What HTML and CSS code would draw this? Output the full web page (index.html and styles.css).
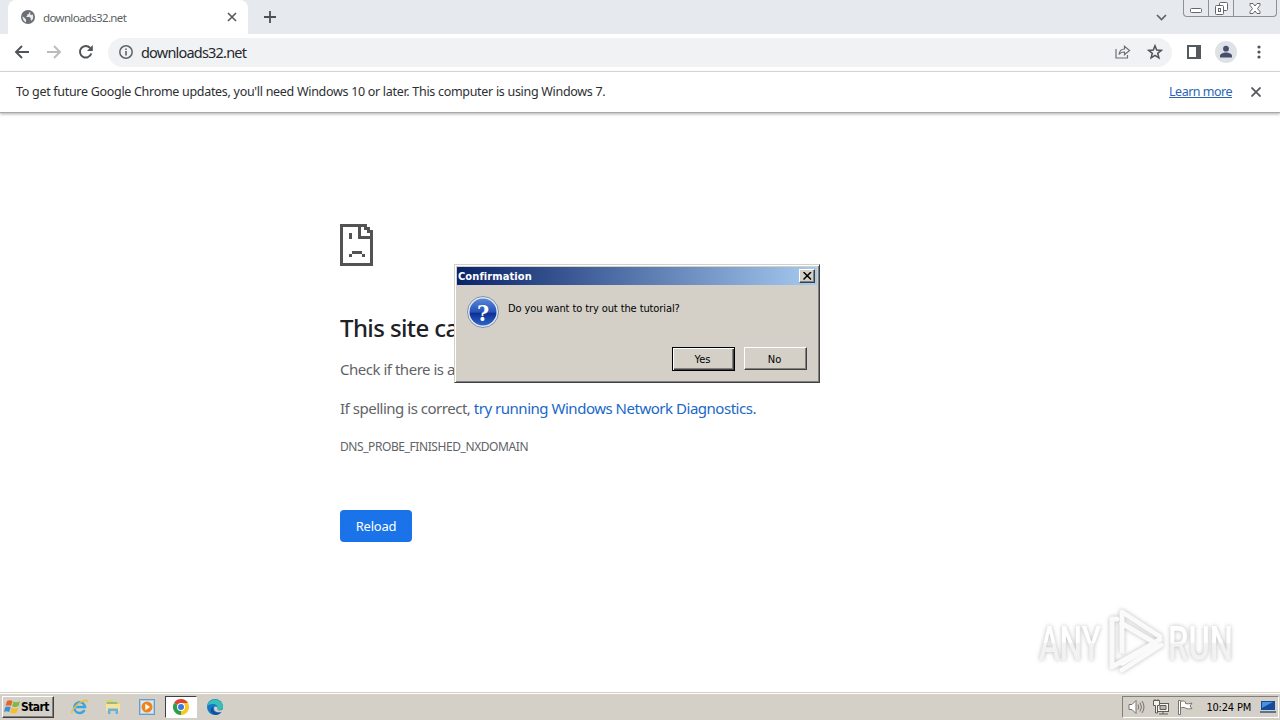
FILE: index.html
```html
<!DOCTYPE html>
<html lang="en">
  <head>
    <meta charset="UTF-8" />
    <meta name="viewport" content="width=device-width, initial-scale=1.0" />
    <title>downloads32.net</title>
    <link rel="stylesheet" href="styles.css">
  </head>

  <body>
    <div class="screen">
      <!-- tabs -->
      <div class="tabs">
        <div class="tab">
          <svg class="globe" width="14" height="14" viewBox="0 0 14 14">
            <circle cx="7" cy="7" r="7" fill="#6b6e72" />
            <path d="M1.5 6.2 4 8.3l1 1.2v2.7C2.7 11.500 1.400 9 1.500 6.200zM5.200 2.400h3l-.4 1.500-1.600.6v1.400L4.800 7h3.700l1.200 1.300v1.900l1.200.4c1.200-1.400 1.900-3.800.8-6L9.900 5 9 4l.7-1.600z" fill="#e9ebee" />
          </svg>
          <span class="tab-title">downloads32.net</span>
          <svg width="10" height="10" viewBox="0 0 10 10" stroke="#55585c" stroke-width="1.6"><path d="M1 1l8 8M9 1L1 9" /></svg>
        </div>
        <svg class="plus" width="12" height="12" viewBox="0 0 12 12" stroke="#4c4f53" stroke-width="1.8"><path d="M6 0v12M0 6h12" /></svg>
        <svg class="chevron" width="11" height="7" viewBox="0 0 11 7" fill="none" stroke="#5f6368" stroke-width="1.7"><path d="M1 1l4.500 4.500L10 1" /></svg>
        <div class="caption">
          <span><svg width="12" height="5" viewBox="0 0 12 5"><rect x=".5" y=".5" width="11" height="4" rx="1" fill="#fff" stroke="#63666b" /></svg></span>
          <span><svg width="13" height="13" viewBox="0 0 13 13" fill="#fff" stroke="#63666b"><rect x="4.500" y=".5" width="8" height="8" rx="1" /><rect x=".5" y="3.500" width="8" height="9" rx="1" /><rect x="3.500" y="6.500" width="2" height="3" /></svg></span>
          <span><svg width="12" height="11" viewBox="0 0 12 11"><path d="M1 .5h3l2 2.500 2-2.500h3v1.800L8.500 5.500 11 8.700v1.800H8L6 8l-2 2.500H1V8.700l2.500-3.200L1 2.300z" fill="#fff" stroke="#63666b" /></svg></span>
        </div>
      </div>

      <!-- toolbar -->
      <div class="toolbar">
        <svg class="back" width="16" height="14" viewBox="0 0 16 14" fill="none" stroke="#505357" stroke-width="1.900"><path d="M15 7H2M8 1L2 7l6 6" /></svg>
        <svg class="forward" width="16" height="14" viewBox="0 0 16 14" fill="none" stroke="#b9bbbe" stroke-width="1.900"><path d="M1 7h13M8 1l6 6-6 6" /></svg>
        <svg class="reload" width="16" height="16" viewBox="0 0 16 16" fill="none" stroke="#505357" stroke-width="2"><path d="M13.300 9.500A5.800 5.800 0 1 1 12.200 4" /><path d="M14.800 1v6H9z" fill="#505357" stroke="none" /></svg>
        <div class="address">
          <svg width="14" height="14" viewBox="0 0 14 14"><circle cx="7" cy="7" r="6.200" fill="none" stroke="#5f6368" stroke-width="1.500" /><path d="M6.200 6h1.600v4.500H6.200zM6.200 3.400h1.600V5H6.200z" fill="#5f6368" /></svg>
          <span class="url">downloads32.net</span>
          <svg class="share" width="16" height="14" viewBox="0 0 16 14" fill="none" stroke="#6b6e72" stroke-width="1.200"><path d="M1 4v9h11.500v-3M4 9.500C4.500 6 6.500 4 9.500 4V1.300L14.500 5.500l-5 4.200V7C7 7 5.200 7.700 4 9.500z" /></svg>
          <svg class="star" width="16" height="16" viewBox="0 0 16 16" fill="none" stroke="#505357" stroke-width="1.500"><path d="M8 1.800l1.700 4.300 4.500.3-3.500 2.900 1.200 4.500L8 11.300l-3.900 2.500 1.200-4.500L1.800 6.400l4.500-.3z" /></svg>
        </div>
        <svg class="panel" width="14" height="14" viewBox="0 0 14 14"><path d="M0 0h14v14H0zM2 2v10h7V2z" fill="#55585c" fill-rule="evenodd" /></svg>
        <svg class="profile" width="22" height="22" viewBox="0 0 22 22"><circle cx="11" cy="11" r="11" fill="#dee1e6" /><circle cx="11" cy="7.700" r="2.900" fill="#46506e" /><path d="M5 16.500v-1.700c0-2 3.500-3.300 6-3.300s6 1.300 6 3.300v1.700z" fill="#46506e" /></svg>
        <svg class="dots" width="4" height="14" viewBox="0 0 4 14" fill="#505357"><circle cx="2" cy="2" r="1.600" /><circle cx="2" cy="7" r="1.600" /><circle cx="2" cy="12" r="1.600" /></svg>
      </div>

      <!-- update notice -->
      <div class="notice">
        <span class="notice-text">To get future Google Chrome updates, you'll need Windows 10 or later. This computer is using Windows 7.</span>
        <a class="learn" href="#">Learn more</a>
        <svg width="10" height="10" viewBox="0 0 10 10" stroke="#55585c" stroke-width="1.800"><path d="M.5.5l9 9M9.500.5l-9 9" /></svg>
      </div>

      <!-- error page -->
      <div class="page">
        <svg class="sad" width="34" height="43" viewBox="0 0 34 43" shape-rendering="crispEdges">
          <path d="M0 0h27v3h3v3h3v36H0zM3 3v36h27V15H18V3zM21 3v9h9V9h-3V6h-3V3z" fill="#535353" fill-rule="evenodd" />
          <path d="M9 9h3v6H9zM12 27h10v3H12zM9 30h3v3H9zM22 30h3v3h-3z" fill="#535353" />
        </svg>
        <h1>This site can't be reached</h1>
        <p class="check">Check if there is a typo in downloads32.net.</p>
        <p class="spell">If spelling is correct, <a href="#">try running Windows Network Diagnostics.</a></p>
        <p class="code">DNS_PROBE_FINISHED_NXDOMAIN</p>
        <button class="reload-btn">Reload</button>
      </div>

      <!-- taskbar -->
      <div class="taskbar">
        <div class="start">
          <svg width="17" height="16" viewBox="0 0 17 16">
            <path d="M3 2c2-1.200 3.500-1 5.500 0L7 7C5 6 3.500 6 1.500 7z" fill="#e8632b" />
            <path d="M9.500 2.500c2 1 4 1 6.500-.3L14.500 7c-2 1.200-4.500 1.200-6.500.3z" fill="#7fb842" />
            <path d="M1.200 8.200c2-1 3.600-1 5.500 0L5.200 13c-2-1-3.500-1-5.200 0z" fill="#3f8fd0" />
            <path d="M7.700 8.700c2 1 4.500 1 6.500 0L12.800 13.500c-2 1.200-4.500 1.200-6.500.2z" fill="#f4bd2c" />
          </svg>
          <b>Start</b>
        </div>
        <div class="app">
          <svg width="17" height="16" viewBox="0 0 17 16" fill="none">
            <path d="M13.500 11c-1 2-2.700 3-4.900 3a5.400 5.400 0 1 1 5.400-6H5" stroke="#3aa5dc" stroke-width="2.500" />
            <path d="M1 14.500C-.5 11 9 1.500 15 1.200c1.200 0 1.400 1.300.8 2.600" stroke="#e9bd45" stroke-width="1.400" />
          </svg>
        </div>
        <div class="app">
          <svg width="16" height="16" viewBox="0 0 16 16">
            <path d="M1 1h6l1 1.500h6V10H1z" fill="#e9cd72" />
            <path d="M2 3h10v2H2z" fill="#8fbf7f" />
            <path d="M1 5h14v7H1z" fill="#f6e29a" />
            <path d="M3 15V9.500h10V15h-2.500v-3h-5v3z" fill="#69b3d9" />
          </svg>
        </div>
        <div class="app">
          <svg width="16" height="16" viewBox="0 0 16 16">
            <rect x=".5" y=".5" width="15" height="15" fill="#a9cdea" stroke="#6a9cc4" />
            <rect x="2" y="2" width="12" height="12" fill="#d9ebf7" />
            <circle cx="8" cy="8" r="5.500" fill="#f08418" />
            <path d="M6.300 4.800v6.400L11 8z" fill="#fff" />
          </svg>
        </div>
        <div class="app active">
          <svg width="16" height="16" viewBox="0 0 16 16">
            <path d="M8 8L1.070 4A8 8 0 0 1 14.930 4z" fill="#df4432" />
            <path d="M8 8l6.930-4A8 8 0 0 1 8 16z" fill="#fbc722" />
            <path d="M8 8v8A8 8 0 0 1 1.070 4z" fill="#2d9e4c" />
            <path d="M8 4h6.930L11.500 10 8 16z" fill="#fbc722" />
            <circle cx="8" cy="8" r="4" fill="#fff" />
            <circle cx="8" cy="8" r="3" fill="#3b78e0" />
          </svg>
        </div>
        <div class="app">
          <svg width="16" height="16" viewBox="0 0 16 16">
            <circle cx="8" cy="8" r="8" fill="#1678c8" />
            <path d="M.2 7A8 8 0 0 1 16 7.500c0 2-1.500 3.500-3.800 3.500-2 0-2.700-1-2-2 .8-1.500-.8-4-4-4C3.500 5 1 5.800.2 7z" fill="#35c1b5" />
            <path d="M6.200 8c-1 3 1.300 6 5.300 5.800 1.500 0 2.500-.6 3.200-1.200-2 3.600-6.500 4.300-9.200 2C2.500 12.500 3.500 8.500 6.200 8z" fill="#124f96" />
            <path d="M8 7.500c2 0 2.500.8 2.200 1.800-.3 1.200.8 2.100 2.500 2.100 1.300 0 2.300-.5 3.300-1.200V13l-1.500-.3c-3 1.500-7 .2-7.500-2.400C6.800 9 7.200 8 8 7.500z" fill="#d4d0c8" />
          </svg>
        </div>
        <div class="tray">
          <svg width="17" height="16" viewBox="0 0 17 16" fill="none" stroke="#77746f">
            <path d="M1 5.500h3l4-4v13l-4-4H1z" fill="#fff" /><path d="M10 5.500q1.500 2.500 0 5M12 3.500q3 4.500 0 9M14 2q4 6 0 12" />
          </svg>
          <svg class="net" width="16" height="16" viewBox="0 0 16 16" fill="#f3f2ef" stroke="#5f5c58">
            <rect x="4.500" y="4.500" width="11" height="8" /><path d="M7 6.500h6v4H7z" fill="#b8b5ae" /><path d="M6 15h9M10 12.500V15" /><path d="M.5 1.500h6v5h-2V14h-2V6.500h-2zM2 0v2M5 0v2" />
          </svg>
          <svg class="flag" width="17" height="16" viewBox="0 0 17 16" fill="#fff" stroke="#77746f">
            <path d="M1.500 1.500h2v14h-2z" /><path d="M3.500 2.500c2-1 3.500-.5 5 .5v1.500c2 .5 4 .3 6.500-.5L13 7l2 2.500c-3 .8-4.500.5-6.500-.5-2-1-3-.7-5 .2z" />
          </svg>
          <span class="clock">10:24 PM</span>
          <svg width="16" height="14" viewBox="0 0 16 14"><path d="M1 1h14v9H1z" fill="#17499a" /><path d="M2 2h11L2 8z" fill="#4b90df" /><path d="M0 11h16v2H0z" fill="#5f7489" /></svg>
        </div>
      </div>

      <!-- watermark -->
      <svg class="watermark" width="240" height="84" viewBox="0 0 240 84">
        <defs>
          <linearGradient id="fade" gradientUnits="userSpaceOnUse" x1="0" y1="20" x2="0" y2="56"><stop offset=".5" stop-color="#fff" /><stop offset=".55" stop-color="#f2f2f2" /></linearGradient>
        </defs>
        <g class="letters">
          <text x="14" y="56" textLength="62" lengthAdjust="spacingAndGlyphs">ANY</text>
          <text x="143" y="56" textLength="65" lengthAdjust="spacingAndGlyphs">RUN</text>
        </g>
        <g class="play">
          <path d="M97 47V8l38 24.500" />
          <path d="M97 19.500l34 20-34 20" />
          <path d="M92 15h-5v48l48-27.500" />
          <path d="M97 66l39-25" />
        </g>
      </svg>

      <!-- confirmation window -->
      <div class="dialog">
        <div class="dialog-title">
          <b>Confirmation</b>
          <span class="dialog-close"><svg width="9" height="8" viewBox="0 0 9 8" stroke="#000" stroke-width="1.500"><path d="M.5 0l7.500 7.500M8 0L.5 7.500" /></svg></span>
        </div>
        <div class="dialog-body">
          <svg class="question" width="32" height="32" viewBox="0 0 32 32">
            <defs>
              <linearGradient id="ball" x1="0" y1="0" x2="0" y2="1"><stop offset="0" stop-color="#5a86d8" /><stop offset=".5" stop-color="#2453b8" /><stop offset=".55" stop-color="#102f94" /><stop offset="1" stop-color="#2a66cc" /></linearGradient>
            </defs>
            <circle cx="16" cy="16" r="15.500" fill="#e6eaf0" stroke="#8190a8" />
            <circle cx="16" cy="16" r="13.500" fill="url(#ball)" />
            <text x="16" y="24.500" text-anchor="middle">?</text>
          </svg>
          <span class="ask">Do you want to try out the tutorial?</span>
        </div>
        <div class="dialog-buttons">
          <button class="yes">Yes</button>
          <button class="no">No</button>
        </div>
      </div>
    </div>
  </body>
</html>
```
FILE: styles.css
```css
* {
  margin: 0;
  padding: 0;
  box-sizing: border-box;
}

body {
  background: #fff;
  font-family: "Noto Sans", "Open Sans", sans-serif;
}

svg {
  display: block;
  flex-shrink: 0;
}

.screen {
  position: relative;
  width: 1280px;
  height: 720px;
  display: flex;
  flex-direction: column;
  overflow: hidden;
}

span,
a,
b,
h1,
p {
  white-space: nowrap;
}

/* tabs */
.tabs {
  height: 34px;
  display: flex;
  align-items: center;
  background: #e6e9ed;
}

.tab {
  width: 240px;
  height: 34px;
  margin-left: 8px;
  padding: 0 11px 0 13px;
  display: flex;
  align-items: center;
  background: #fff;
  border-radius: 8px 8px 0 0;
}

.tab-title {
  margin-left: 8px;
  margin-right: auto;
  font-size: 11.5px;
  letter-spacing: -0.65px;
  color: #5c5f63;
}

.plus {
  margin-left: 16px;
}

.chevron {
  margin-left: auto;
}

.caption {
  align-self: flex-start;
  margin: 0 3px 0 16px;
  width: 94px;
  height: 17px;
  display: flex;
  border: 1px solid #8d9095;
  border-top: none;
  border-radius: 0 0 4px 4px;
}

.caption span {
  width: 25px;
  display: flex;
  justify-content: center;
  align-items: center;
  border-right: 1px solid #8d9095;
}

.caption span:first-child svg {
  margin-top: 5px;
}

.caption span:last-child {
  flex: 1;
  border: none;
}

/* toolbar */
.toolbar {
  height: 38px;
  padding: 0 19px 1px 14px;
  display: flex;
  align-items: center;
  border-bottom: 1px solid #d9dbde;
}

.forward {
  margin-left: 16px;
}

.reload {
  margin-left: 16px;
}

.address {
  width: 1064px;
  height: 29px;
  margin-left: 14px;
  padding: 0 9px 0 11px;
  display: flex;
  align-items: center;
  background: #f0f2f4;
  border-radius: 15px;
}

.url {
  margin-left: 8px;
  margin-right: auto;
  font-size: 14.5px;
  letter-spacing: -0.8px;
  color: #26282b;
}

.star {
  margin-left: 16px;
}

.panel {
  margin-left: 15px;
}

.profile {
  margin-left: 14px;
}

.dots {
  margin-left: 20px;
}

/* update notice */
.notice {
  height: 41px;
  padding: 0 19px 1px 16px;
  display: flex;
  align-items: center;
  font-size: 12.5px;
  color: #2d2f32;
  border-bottom: 1px solid #a9a9a9;
  box-shadow: 0 1px 3px #aaa;
}

.notice-text {
  letter-spacing: -0.3px;
}

.learn {
  margin-left: auto;
  margin-right: 19px;
  letter-spacing: -0.5px;
  color: #2a65b5;
}

/* error page */
.page {
  flex: 1;
  padding: 111px 0 0 340px;
  color: #5f6368;
}

.page h1 {
  margin-top: 46px;
  font-size: 24px;
  line-height: 30px;
  font-weight: 500;
  letter-spacing: -0.6px;
  color: #202124;
}

.check {
  margin-top: 16px;
  font-size: 15px;
  line-height: 20px;
  letter-spacing: -0.48px;
}

.spell {
  margin-top: 19px;
  font-size: 15px;
  line-height: 20px;
  letter-spacing: -0.48px;
}

.spell a {
  color: #1967c8;
  text-decoration: none;
}

.code {
  margin-top: 19px;
  font-size: 12px;
  line-height: 20px;
  letter-spacing: -0.42px;
}

.reload-btn {
  display: block;
  width: 72px;
  height: 32px;
  margin-top: 53px;
  font-family: inherit;
  font-size: 13px;
  letter-spacing: -0.2px;
  color: #fff;
  background: #1a73e8;
  border: none;
  border-radius: 4px;
}

/* taskbar */
.taskbar {
  height: 28px;
  padding: 3px 1px 1px 2px;
  display: flex;
  background: #d4d0c8;
  border-top: 1px solid #d4d0c8;
  box-shadow: inset 0 1px #fff;
  font-family: "DejaVu Sans Condensed", "DejaVu Sans", sans-serif;
  font-stretch: condensed;
}

.start {
  width: 52px;
  height: 22px;
  margin-right: 9px;
  padding-left: 1px;
  display: flex;
  align-items: center;
  font-size: 12px;
  letter-spacing: -0.6px;
  border: 1px solid;
  border-color: #fff #404040 #404040 #fff;
  box-shadow: inset -1px -1px #808080;
}

.app {
  width: 32px;
  height: 22px;
  margin-right: 2px;
  display: flex;
  align-items: center;
  justify-content: center;
}

.active {
  background: #fff;
  border: 1px solid;
  border-color: #404040 #fff #fff #404040;
}

.tray {
  width: 157px;
  height: 22px;
  margin-left: auto;
  padding: 0 2px 0 5px;
  display: flex;
  align-items: center;
  border: 1px solid;
  border-color: #808080 #fff #fff #808080;
}

.net,
.flag {
  margin-left: 8px;
}

.clock {
  margin-left: auto;
  margin-right: 9px;
  font-size: 11px;
  letter-spacing: -0.2px;
}

/* watermark */
.watermark {
  position: absolute;
  left: 1025px;
  top: 604px;
  fill: url(#fade);
  filter: drop-shadow(0 0 2px #bbb);
}

.letters {
  font-family: Roboto, sans-serif;
  font-size: 49px;
  font-weight: 500;
}

.play {
  fill: none;
  stroke: #fafafa;
  stroke-width: 5;
  stroke-linejoin: round;
  stroke-linecap: round;
}

/* confirmation window */
.dialog {
  position: absolute;
  left: 454px;
  top: 264px;
  width: 366px;
  height: 119px;
  padding: 2px;
  background: #d4d0c8;
  border: 1px solid;
  border-color: #d4d0c8 #404040 #404040 #d4d0c8;
  box-shadow: inset 1px 1px #fff, inset -1px -1px #808080;
  font-family: "DejaVu Sans Condensed", "DejaVu Sans", sans-serif;
  font-stretch: condensed;
  font-size: 11px;
  color: #000;
}

.dialog-title {
  height: 18px;
  padding: 0 2px 0 1px;
  display: flex;
  align-items: center;
  justify-content: space-between;
  letter-spacing: 0.1px;
  color: #fff;
  background: linear-gradient(to right, #0a246a, #a6caf0);
}

.dialog-close {
  width: 16px;
  height: 14px;
  display: flex;
  align-items: center;
  justify-content: center;
  background: #d4d0c8;
  border: 1px solid;
  border-color: #fff #404040 #404040 #fff;
  box-shadow: inset -1px -1px #808080;
}

.dialog-body {
  display: flex;
  padding: 11px 0 0 10px;
}

.question text {
  font-family: "DejaVu Serif", serif;
  font-size: 23px;
  font-weight: bold;
  fill: #fff;
}

.ask {
  margin: 6px 0 0 9px;
  letter-spacing: -0.1px;
}

.dialog-buttons {
  margin-top: 19px;
  padding-right: 10px;
  display: flex;
  justify-content: flex-end;
  gap: 9px;
}

.dialog-buttons button {
  width: 63px;
  height: 23px;
  padding: 1px 2px 0 0;
  font: inherit;
  color: #000;
  background: #d4d0c8;
  border: 1px solid;
  border-color: #fff #404040 #404040 #fff;
  box-shadow: inset -1px -1px #808080;
}

.dialog-buttons .yes {
  height: 24px;
  border-color: #000;
  box-shadow: inset 1px 1px #fff, inset -1px -1px #404040, inset -2px -2px #808080;
}
```
